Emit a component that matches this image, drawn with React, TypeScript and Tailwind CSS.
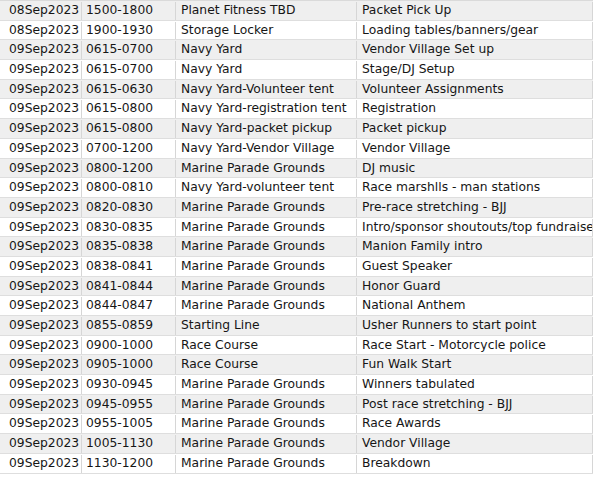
import React from "react";

const rows: [string, string, string, string][] = [
  ["08Sep2023", "1500-1800", "Planet Fitness TBD", "Packet Pick Up"],
  ["08Sep2023", "1900-1930", "Storage Locker", "Loading tables/banners/gear"],
  ["09Sep2023", "0615-0700", "Navy Yard", "Vendor Village Set up"],
  ["09Sep2023", "0615-0700", "Navy Yard", "Stage/DJ Setup"],
  ["09Sep2023", "0615-0630", "Navy Yard-Volunteer tent", "Volunteer Assignments"],
  ["09Sep2023", "0615-0800", "Navy Yard-registration tent", "Registration"],
  ["09Sep2023", "0615-0800", "Navy Yard-packet pickup", "Packet pickup"],
  ["09Sep2023", "0700-1200", "Navy Yard-Vendor Village", "Vendor Village"],
  ["09Sep2023", "0800-1200", "Marine Parade Grounds", "DJ music"],
  ["09Sep2023", "0800-0810", "Navy Yard-volunteer tent", "Race marshlls - man stations"],
  ["09Sep2023", "0820-0830", "Marine Parade Grounds", "Pre-race stretching - BJJ"],
  ["09Sep2023", "0830-0835", "Marine Parade Grounds", "Intro/sponsor shoutouts/top fundraisers"],
  ["09Sep2023", "0835-0838", "Marine Parade Grounds", "Manion Family intro"],
  ["09Sep2023", "0838-0841", "Marine Parade Grounds", "Guest Speaker"],
  ["09Sep2023", "0841-0844", "Marine Parade Grounds", "Honor Guard"],
  ["09Sep2023", "0844-0847", "Marine Parade Grounds", "National Anthem"],
  ["09Sep2023", "0855-0859", "Starting Line", "Usher Runners to start point"],
  ["09Sep2023", "0900-1000", "Race Course", "Race Start - Motorcycle police"],
  ["09Sep2023", "0905-1000", "Race Course", "Fun Walk Start"],
  ["09Sep2023", "0930-0945", "Marine Parade Grounds", "Winners tabulated"],
  ["09Sep2023", "0945-0955", "Marine Parade Grounds", "Post race stretching - BJJ"],
  ["09Sep2023", "0955-1005", "Marine Parade Grounds", "Race Awards"],
  ["09Sep2023", "1005-1130", "Marine Parade Grounds", "Vendor Village"],
  ["09Sep2023", "1130-1200", "Marine Parade Grounds", "Breakdown"],
];

export default function App() {
  return (
    <div className="h-[487px] w-[593px] overflow-hidden bg-white font-['DejaVu_Sans','Verdana',sans-serif] text-[12.3px] text-[#161616]">
      <div className="border-t border-[#dadada]">
        {rows.map((r, i) => (
          <div
            key={i}
            className={`grid h-[19.7px] grid-cols-[82px_94px_181px_236px] border-b border-[#dedede] pt-px leading-[17.7px] ${
              i % 2 === 0 ? "bg-[#efefef]" : "bg-white"
            }`}
          >
            <div className="overflow-hidden whitespace-nowrap border-r border-[#d6d6d6] pl-[9px]">{r[0]}</div>
            <div className="overflow-hidden whitespace-nowrap border-r border-[#d6d6d6] pl-[4px]">{r[1]}</div>
            <div className="overflow-hidden whitespace-nowrap border-r border-[#d6d6d6] pl-[5px]">{r[2]}</div>
            <div className="overflow-hidden whitespace-nowrap border-r border-[#d6d6d6] pl-[5px]">{r[3]}</div>
          </div>
        ))}
      </div>
    </div>
  );
}
